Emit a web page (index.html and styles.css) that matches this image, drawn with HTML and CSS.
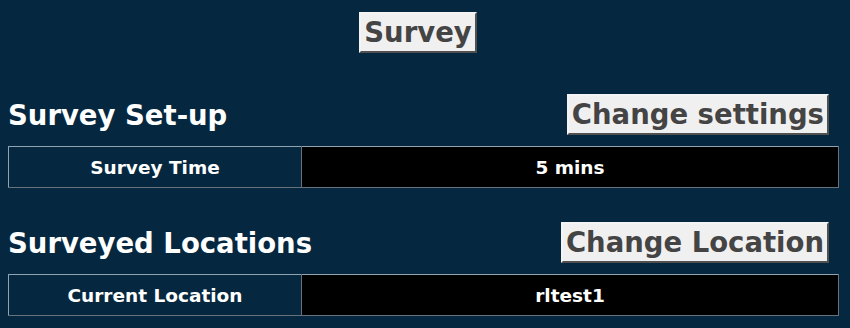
FILE: index.html
```html
<!DOCTYPE html>
<html>
<head>
<meta charset="utf-8">
<link rel="stylesheet" href="styles.css">
</head>
<body>
<div class="top">
  <button class="btn">Survey</button>
</div>
<section class="section first">
  <div class="section-head">
    <h2 class="title">Survey Set-up</h2>
    <button class="btn">Change settings</button>
  </div>
  <table class="info">
    <tr>
      <th class="label">Survey Time</th>
      <td class="value">5 mins</td>
    </tr>
  </table>
</section>
<section class="section second">
  <div class="section-head">
    <h2 class="title">Surveyed Locations</h2>
    <button class="btn">Change Location</button>
  </div>
  <table class="info">
    <tr>
      <th class="label">Current Location</th>
      <td class="value">rltest1</td>
    </tr>
  </table>
</section>
</body>
</html>
```
FILE: styles.css
```css
html, body {
  margin: 0;
  padding: 0;
  background: #052840;
}
body {
  padding: 0 8px;
  font-family: "DejaVu Sans", Verdana, sans-serif;
  color: #ffffff;
}
.top {
  padding-top: 12px;
  padding-right: 14px;
  display: flex;
  justify-content: center;
}
.btn {
  font-family: "DejaVu Sans", Verdana, sans-serif;
  font-weight: bold;
  font-size: 27.5px;
  color: #444444;
  background: #f0f0f0;
  border: 2px solid;
  border-color: #f4f4f4 #505050 #505050 #f4f4f4;
  padding: 3px 3px;
  margin: 0;
  line-height: 31px;
}
.section.first { margin-top: 41px; }
.section.second { margin-top: 34px; }
.section-head {
  display: flex;
  justify-content: space-between;
  align-items: center;
  padding-right: 13px;
}
.title {
  margin: 0;
  font-size: 27.5px;
  font-weight: bold;
  color: #ffffff;
}
.info {
  margin-top: 11px;
  width: 831px;
  border-collapse: collapse;
  border: 1px solid;
  border-color: #8fa3b3 #66727c #66727c #8fa3b3;
}
.info th, .info td {
  height: 40px;
  padding: 0;
  text-align: center;
  font-size: 18.5px;
  font-weight: bold;
  color: #ffffff;
  border: 1px solid;
  border-color: #8fa3b3 #66727c #66727c #8fa3b3;
}
.label {
  width: 292px;
  background: #052840;
}
.value {
  background: #000000;
}
```
